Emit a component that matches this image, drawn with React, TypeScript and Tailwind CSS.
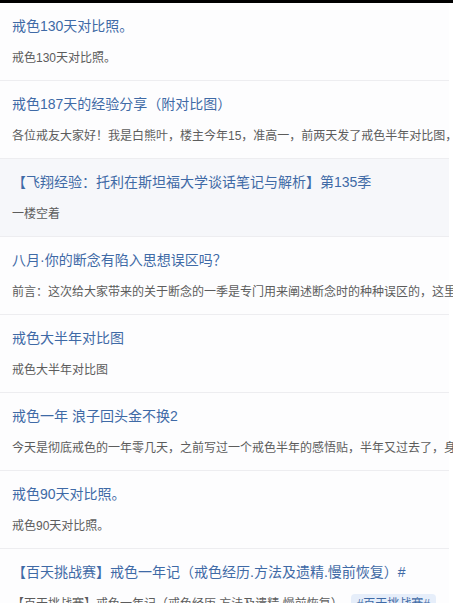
const posts = [
  { title: "戒色130天对比照。", excerpt: "戒色130天对比照。" },
  {
    title: "戒色187天的经验分享（附对比图）",
    excerpt: "各位戒友大家好！我是白熊叶，楼主今年15，准高一，前两天发了戒色半年对比图，有很多人问我",
  },
  {
    title: "【飞翔经验：托利在斯坦福大学谈话笔记与解析】第135季",
    excerpt: "一楼空着",
    active: true,
  },
  {
    title: "八月·你的断念有陷入思想误区吗？",
    excerpt: "前言：这次给大家带来的关于断念的一季是专门用来阐述断念时的种种误区的，这里就不多说了",
  },
  { title: "戒色大半年对比图", excerpt: "戒色大半年对比图" },
  {
    title: "戒色一年 浪子回头金不换2",
    excerpt: "今天是彻底戒色的一年零几天，之前写过一个戒色半年的感悟贴，半年又过去了，身体",
  },
  { title: "戒色90天对比照。", excerpt: "戒色90天对比照。" },
  {
    title: "【百天挑战赛】戒色一年记（戒色经历.方法及遗精.慢前恢复）#",
    excerpt: "【百天挑战赛】戒色一年记（戒色经历.方法及遗精.慢前恢复）",
    tag: "#百天挑战赛#",
  },
];

export default function App() {
  return (
    <div
      className="h-[603px] w-[453px] overflow-hidden bg-white"
      style={{ fontFamily: '"Liberation Sans", "Noto Sans CJK SC", sans-serif' }}
    >
      <div className="h-[3px] bg-black" />
      <ul className="w-[449px]">
        {posts.map((p) => (
          <li
            key={p.title}
            className={`border-b border-[#ededf0] px-3 pt-[13px] pb-[12px] ${
              p.active ? "bg-[#f6f7fa]" : "bg-[#fdfdfe]"
            }`}
          >
            <p className="whitespace-nowrap text-[14px] leading-[20px] text-[#3f6aa6]">
              {p.title}
            </p>
            <p className="mt-[12px] flex items-center whitespace-nowrap text-[12px] leading-[20px] text-[#5c5c5c]">
              <span>{p.excerpt}</span>
              {p.tag && (
                <span className="ml-2 rounded-sm bg-[#e6eefa] px-1.5 text-[#3f6aa6]">
                  {p.tag}
                </span>
              )}
            </p>
          </li>
        ))}
      </ul>
    </div>
  );
}
